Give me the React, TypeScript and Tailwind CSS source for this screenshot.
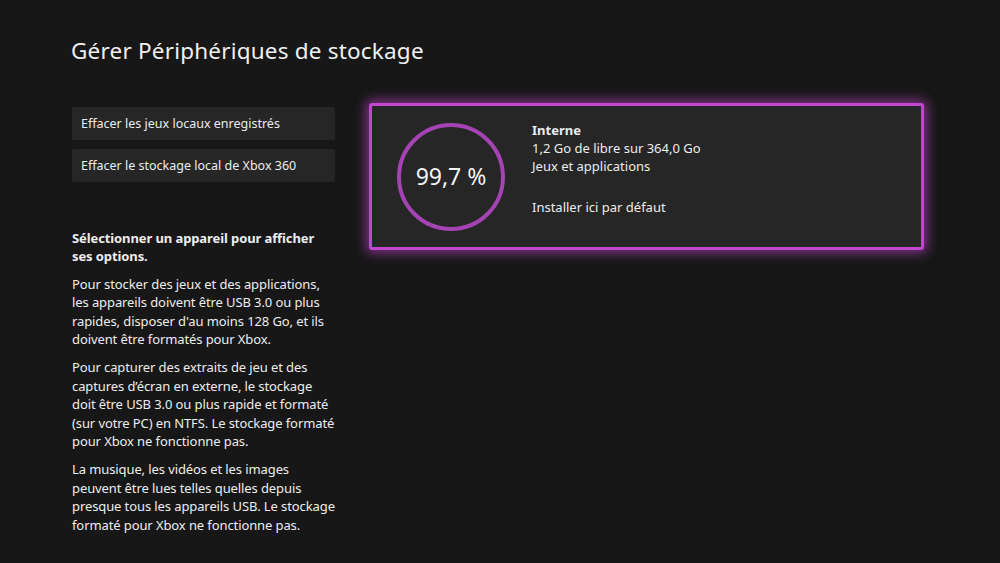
export default function App() {
  const font = { fontFamily: '"Noto Sans", "Open Sans", sans-serif' };

  return (
    <div className="w-[1000px] h-[563px] bg-[#171717] text-[#f2f2f2] overflow-hidden" style={font}>
      <div className="pl-[71px] pt-[36px]">
        <h1 className="text-[22.5px] leading-[30px] tracking-[0.2px] text-[#f0f0f0]">
          Gérer Périphériques de stockage
        </h1>
      </div>

      <div className="flex pl-[72px] pt-[41px] gap-[34px]">
        {/* left column */}
        <div className="w-[263px] flex flex-col">
          <div className="flex flex-col gap-[9px]">
            <button className="h-[33px] bg-[#262626] text-left pl-[9px] pt-[2px] text-[12.5px] text-[#ececec] rounded-[2px]">
              Effacer les jeux locaux enregistrés
            </button>
            <button className="h-[33px] bg-[#262626] text-left pl-[9px] pt-[2px] text-[12.5px] text-[#ececec] rounded-[2px]">
              Effacer le stockage local de Xbox 360
            </button>
          </div>

          <div className="mt-[47px] text-[13px] leading-[18.4px] text-[#ededed] tracking-[-0.1px]">
            <p className="font-bold">Sélectionner un appareil pour afficher ses options.</p>
            <p className="mt-[9px]">
              Pour stocker des jeux et des applications, les appareils doivent être USB 3.0 ou plus rapides,
              disposer d'au moins 128 Go, et ils doivent être formatés pour Xbox.
            </p>
            <p className="mt-[10px]">
              Pour capturer des extraits de jeu et des captures d’écran en externe, le stockage doit être USB
              3.0 ou plus rapide et formaté (sur votre PC) en NTFS. Le stockage formaté pour Xbox ne
              fonctionne pas.
            </p>
            <p className="mt-[10px]">
              La musique, les vidéos et les images peuvent être lues telles quelles depuis presque tous les
              appareils USB. Le stockage formaté pour Xbox ne fonctionne pas.
            </p>
          </div>
        </div>

        {/* storage card */}
        <div className="-mt-[4px]">
          <div className="w-[555px] h-[147px] bg-[#262626] border-[3px] border-[#c246cf] rounded-[3px] shadow-[0_0_12px_3px_rgba(200,70,210,0.6)] flex items-center">
            <div className="ml-[25px] w-[108px] h-[108px] rounded-full border-[4px] border-[#a543b5] flex items-center justify-center">
              <span className="text-[23px] text-[#f4f4f4]">99,7 %</span>
            </div>
            <div className="ml-[27px] text-[13px] leading-[18px] text-[#ececec] self-start mt-[15px]">
              <div className="font-bold">Interne</div>
              <div>1,2 Go de libre sur 364,0 Go</div>
              <div>Jeux et applications</div>
              <div className="mt-[23px]">Installer ici par défaut</div>
            </div>
          </div>
        </div>
      </div>
    </div>
  );
}
